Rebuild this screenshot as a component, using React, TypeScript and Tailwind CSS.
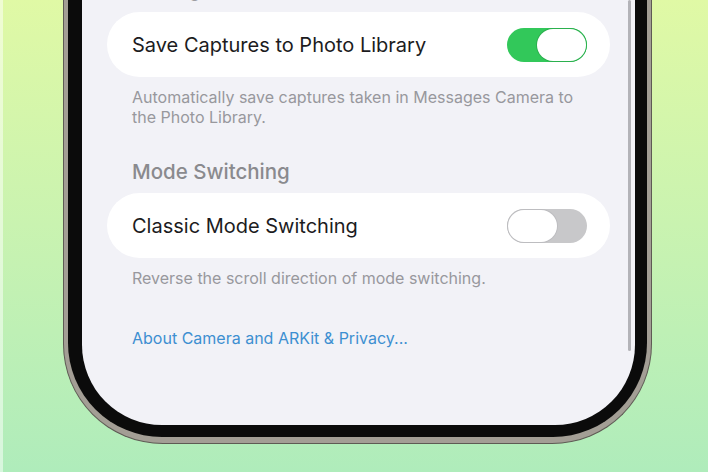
import React from 'react';

const Toggle = ({ on }: { on: boolean }) => (
  <div
    className={`w-[80px] h-[34px] rounded-full p-[1px] flex ${on ? 'bg-[#32c85a] justify-end' : 'bg-[#c8c8ca] justify-start'}`}
  >
    <div
      className={`w-[49px] h-full rounded-full bg-white ${on ? 'shadow-[0_0_0_1px_#2bb04e]' : 'shadow-[0_0_0_1px_#bdbdc0]'}`}
    />
  </div>
);

const Row = ({ label, on }: { label: string; on: boolean }) => (
  <div className="h-[65px] rounded-full bg-white flex items-center justify-between pl-[25px] pr-[23px]">
    <span className="text-[20px] leading-[24px] text-[#1c1c1e]">{label}</span>
    <Toggle on={on} />
  </div>
);

export default function App() {
  return (
    <div
      className="w-[708px] h-[472px] overflow-hidden flex bg-linear-to-b from-[#e0f9a5] to-[#afecbb]"
      style={{ fontFamily: "Inter, 'Noto Sans', sans-serif" }}
    >
      <div className="w-[3px] h-full bg-white/50" />
      {/* phone frame */}
      <div className="ml-[60px] w-[589px] h-[444px] rounded-b-[100px] bg-[#a39e95] border border-t-0 border-[#5e5a54] px-[4px] pb-[6px]">
        <div className="h-full rounded-b-[94px] bg-[#0b0b0b] pl-[14px] pr-[12px] pb-[12px]">
          <div className="relative h-full rounded-b-[80px] bg-[#f2f2f7] overflow-hidden px-[25px] flex flex-col">
            {/* section header scrolled mostly out of view */}
            <div className="h-[24px] -mt-[23px] mb-[11px] pl-[25px] text-[20.5px] leading-[24px] font-medium text-[#8a8a8e]">
              Settings
            </div>
            <Row label="Save Captures to Photo Library" on={true} />
            <p className="mt-[11px] pl-[25px] pr-[20px] text-[16px] leading-[19.5px] text-[#98989d]">
              Automatically save captures taken in Messages Camera to the Photo Library.
            </p>
            <div className="mt-[33px] mb-[9px] pl-[25px] text-[20.5px] leading-[24px] font-medium text-[#8a8a8e]">
              Mode Switching
            </div>
            <Row label="Classic Mode Switching" on={false} />
            <p className="mt-[11px] pl-[25px] text-[16px] leading-[19.5px] text-[#98989d]">
              Reverse the scroll direction of mode switching.
            </p>
            <p className="mt-[40px] pl-[25px] text-[16px] leading-[19.5px] text-[#3d8fd1]">
              About Camera and ARKit &amp; Privacy...
            </p>
            <div className="absolute right-[4px] top-0 h-[351px] w-[3px] rounded-full bg-[#b3b3b8]" />
          </div>
        </div>
      </div>
    </div>
  );
}
